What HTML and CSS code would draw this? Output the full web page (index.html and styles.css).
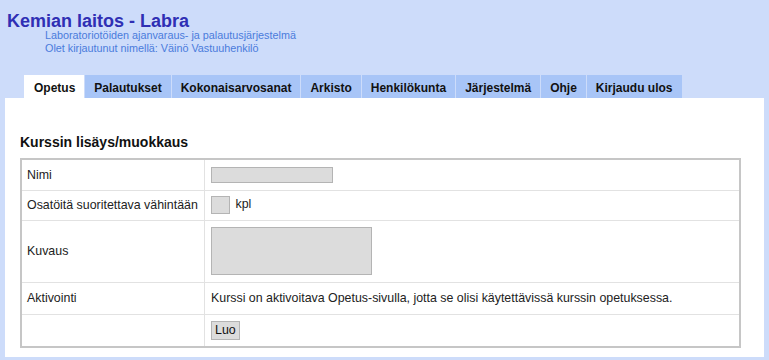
FILE: index.html
```html
<!DOCTYPE html>
<html lang="fi">

<head>
  <meta charset="UTF-8">
  <title>Kemian laitos - Labra</title>
  <link rel="stylesheet" href="styles.css">
</head>

<body>
  <div class="header">
    <h1>Kemian laitos - Labra</h1>
    <div class="subtitle">
      Laboratoriotöiden ajanvaraus- ja palautusjärjestelmä<br>
      Olet kirjautunut nimellä: Väinö Vastuuhenkilö
    </div>
  </div>

  <ul class="tabs">
    <li class="active">Opetus</li>
    <li>Palautukset</li>
    <li>Kokonaisarvosanat</li>
    <li>Arkisto</li>
    <li>Henkilökunta</li>
    <li>Järjestelmä</li>
    <li>Ohje</li>
    <li>Kirjaudu ulos</li>
  </ul>

  <div class="content">
    <h2>Kurssin lisäys/muokkaus</h2>
    <table class="form-table">
      <tr class="row-name">
        <td class="label">Nimi</td>
        <td><input type="text" class="field-name"></td>
      </tr>
      <tr class="row-count">
        <td class="label">Osatöitä suoritettava vähintään</td>
        <td><input type="text" class="field-count"> <span class="unit">kpl</span></td>
      </tr>
      <tr class="row-desc">
        <td class="label">Kuvaus</td>
        <td><textarea class="field-desc"></textarea></td>
      </tr>
      <tr class="row-info">
        <td class="label">Aktivointi</td>
        <td>Kurssi on aktivoitava Opetus-sivulla, jotta se olisi käytettävissä kurssin opetuksessa.</td>
      </tr>
      <tr class="row-submit">
        <td class="label"></td>
        <td><button>Luo</button></td>
      </tr>
    </table>
  </div>
</body>

</html>
```

FILE: styles.css
```css
body {
  margin: 0;
  background-color: #cddcfa;
  font-family: 'Liberation Sans', Arial, sans-serif;
  color: #222;
}

.header {
  padding: 14px 0 0 7px;
}

.header h1 {
  margin: 0;
  font-size: 18px;
  line-height: 14px;
  color: #2f2fb4;
}

.subtitle {
  margin: 1px 0 0 38px;
  font-size: 10.8px;
  line-height: 13px;
  color: #4a7bdc;
}

.tabs {
  display: flex;
  gap: 1px;
  list-style: none;
  margin: 20px 0 0 0;
  padding: 0 0 0 24px;
}

.tabs li {
  background-color: #a8c5f7;
  padding: 6px 9px 2px 9px;
  font-size: 12px;
  line-height: 15px;
  font-weight: bold;
  color: #111;
}

.tabs li.active {
  background-color: white;
  padding-left: 10px;
  padding-right: 9px;
}

.content {
  background-color: white;
  margin: 0 5px;
  padding: 36px 15px 9px 15px;
}

.content h2 {
  margin: 0 0 7px 0;
  font-size: 14px;
  line-height: 17px;
  color: #111;
}

.form-table {
  width: 721px;
  border-collapse: collapse;
  border: 2px solid #c6c6c6;
  font-size: 12.4px;
}

.form-table td {
  border: 1px solid #e2e2e2;
  padding: 0 6px;
  vertical-align: middle;
}

.form-table td.label {
  width: 171px;
  padding-left: 5px;
}

.row-name { height: 31px; }
.row-count { height: 30px; }
.row-desc { height: 62px; }
.row-info { height: 32px; }
.row-submit { height: 33px; }

input,
textarea,
button {
  box-sizing: border-box;
  background-color: #dcdcdc;
  border: 1px solid #b4b4b4;
  font-family: 'Liberation Sans', Arial, sans-serif;
  margin: 0;
  vertical-align: middle;
}

.field-name {
  width: 122px;
  height: 16px;
}

.field-count {
  width: 19px;
  height: 18px;
}

.unit {
  margin-left: 2px;
}

.field-desc {
  display: block;
  width: 161px;
  height: 48px;
  resize: none;
}

button {
  font-size: 12.4px;
  height: 19px;
  padding: 0 3px;
  color: #111;
}
```
